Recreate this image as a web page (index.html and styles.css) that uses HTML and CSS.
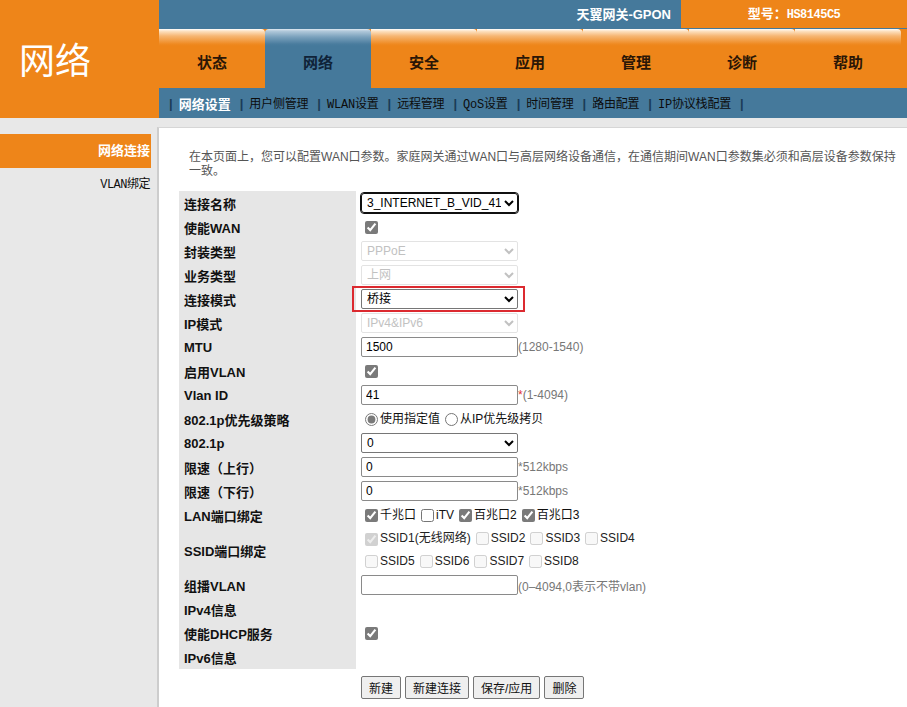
FILE: index.html
```html
<!DOCTYPE html>
<html lang="zh-CN">
<head>
<meta charset="utf-8">
<title>网络 - 网络连接</title>
<link rel="stylesheet" href="styles.css">
</head>
<body>
<header class="header">
  <div class="logo">网络</div>
  <div class="head-right">
    <div class="topbar">
      <div class="brand">天翼网关-GPON</div>
      <div class="model">型号：<span class="mono">HS8145C5</span></div>
    </div>
    <nav class="tabs">
      <a class="tab">状态</a>
      <a class="tab active">网络</a>
      <a class="tab">安全</a>
      <a class="tab">应用</a>
      <a class="tab">管理</a>
      <a class="tab">诊断</a>
      <a class="tab">帮助</a>
    </nav>
    <nav class="subnav">
      <span class="sep">|</span><a class="sub active">网络设置</a>
      <span class="sep">|</span><a class="sub">用户侧管理</a>
      <span class="sep">|</span><a class="sub">WLAN设置</a>
      <span class="sep">|</span><a class="sub">远程管理</a>
      <span class="sep">|</span><a class="sub">QoS设置</a>
      <span class="sep">|</span><a class="sub">时间管理</a>
      <span class="sep">|</span><a class="sub">路由配置</a>
      <span class="sep">|</span><a class="sub">IP协议栈配置</a>
      <span class="sep">|</span>
    </nav>
  </div>
</header>
<div class="main">
  <aside class="sidebar">
    <div class="side-item active">网络连接</div>
    <div class="side-item">VLAN绑定</div>
  </aside>
  <section class="panel">
    <p class="desc">在本页面上，您可以配置WAN口参数。家庭网关通过WAN口与高层网络设备通信，在通信期间WAN口参数集必须和高层设备参数保持一致。</p>
    <table class="form">
      <tr><th>连接名称</th><td><select class="sel focus"><option>3_INTERNET_B_VID_41</option></select></td></tr>
      <tr><th>使能WAN</th><td><input type="checkbox" checked></td></tr>
      <tr><th>封装类型</th><td><select class="sel" disabled><option>PPPoE</option></select></td></tr>
      <tr><th>业务类型</th><td><select class="sel" disabled><option>上网</option></select></td></tr>
      <tr><th>连接模式</th><td><span class="mark"><select class="sel"><option>桥接</option></select></span></td></tr>
      <tr><th>IP模式</th><td><select class="sel" disabled><option>IPv4&amp;IPv6</option></select></td></tr>
      <tr><th>MTU</th><td><input class="txt" type="text" value="1500"><span class="hint">(1280-1540)</span></td></tr>
      <tr><th>启用VLAN</th><td><input type="checkbox" checked></td></tr>
      <tr><th>Vlan ID</th><td><input class="txt" type="text" value="41"><span class="hint"><span class="req">*</span>(1-4094)</span></td></tr>
      <tr><th>802.1p优先级策略</th><td><label class="opt"><input type="radio" name="pri" checked>使用指定值</label><label class="opt"><input type="radio" name="pri">从IP优先级拷贝</label></td></tr>
      <tr><th>802.1p</th><td><select class="sel"><option>0</option></select></td></tr>
      <tr><th>限速（上行）</th><td><input class="txt" type="text" value="0"><span class="hint">*512kbps</span></td></tr>
      <tr><th>限速（下行）</th><td><input class="txt" type="text" value="0"><span class="hint">*512kbps</span></td></tr>
      <tr><th>LAN端口绑定</th><td><label class="opt"><input type="checkbox" checked>千兆口</label><label class="opt"><input type="checkbox">iTV</label><label class="opt"><input type="checkbox" checked>百兆口2</label><label class="opt"><input type="checkbox" checked>百兆口3</label></td></tr>
      <tr class="tall"><th>SSID端口绑定</th><td>
        <div class="line"><label class="opt dim"><input type="checkbox" checked disabled>SSID1(无线网络)</label><label class="opt dim"><input type="checkbox" disabled>SSID2</label><label class="opt dim"><input type="checkbox" disabled>SSID3</label><label class="opt dim"><input type="checkbox" disabled>SSID4</label></div>
        <div class="line"><label class="opt dim"><input type="checkbox" disabled>SSID5</label><label class="opt dim"><input type="checkbox" disabled>SSID6</label><label class="opt dim"><input type="checkbox" disabled>SSID7</label><label class="opt dim"><input type="checkbox" disabled>SSID8</label></div>
      </td></tr>
      <tr><th>组播VLAN</th><td><input class="txt" type="text" value=""><span class="hint">(0–4094,0表示不带vlan)</span></td></tr>
      <tr><th>IPv4信息</th><td></td></tr>
      <tr><th>使能DHCP服务</th><td><input type="checkbox" checked></td></tr>
      <tr><th>IPv6信息</th><td></td></tr>
    </table>
    <div class="actions">
      <button class="btn">新建</button>
      <button class="btn">新建连接</button>
      <button class="btn">保存/应用</button>
      <button class="btn">删除</button>
    </div>
  </section>
</div>
</body>
</html>
```
FILE: styles.css
```css
* { box-sizing: border-box; }
html, body { margin: 0; padding: 0; }
body {
  font-family: "Liberation Sans", "Noto Sans CJK SC", sans-serif;
  font-size: 13px;
  color: #000;
  background: #e8e8e8;
  overflow: hidden;
}

/* header */
.header {
  display: grid;
  grid-template-columns: 159px 1fr;
  height: 118px;
}
.logo {
  background: #ee8519;
  color: #fff;
  font-family: "Noto Sans CJK SC", sans-serif;
  font-size: 36px;
  display: flex;
  align-items: center;
  padding-left: 19px;
  padding-bottom: 2px;
}
.head-right { display: flex; flex-direction: column; }
.topbar {
  height: 29px;
  display: flex;
  background: #45799b;
}
.brand {
  flex: 1;
  text-align: right;
  padding-right: 10px;
  color: #fff;
  font-weight: bold;
  line-height: 29px;
}
.model {
  width: 226px;
  height: 28px;
  background: #ee8519;
  color: #fff;
  font-weight: bold;
  text-align: center;
  line-height: 28px;
}
.mono {
  font-family: "Liberation Mono", monospace;
  font-size: 12px;
  letter-spacing: -0.5px;
}
.tabs {
  height: 59px;
  display: flex;
  background: #ee8519;
}
.tab {
  width: 106px;
  display: flex;
  align-items: center;
  justify-content: center;
  padding-top: 6px;
  font-size: 15px;
  font-weight: bold;
  color: #2b1606;
  background: linear-gradient(#ffffff 0, #fde3c4 2px, #f6b673 7px, #ef8a22 15px, #ee8519 17px);
  border-radius: 0 4px 0 0;
}
.tab.active {
  color: #0f2238;
  background: linear-gradient(#dfe9f0 0, #b3cadb 2px, #7aa1bc 8px, #4a7c9e 15px, #45799b 17px);
  border-radius: 4px 4px 0 0;
}
.subnav {
  height: 30px;
  background: #45799b;
  display: flex;
  align-items: center;
  padding-left: 10px;
  font-family: "Liberation Mono", "Noto Sans CJK SC", monospace;
  font-size: 12px;
  color: #0c0c0c;
}
.sep {
  color: #1a3b57;
  font-family: "Liberation Sans", sans-serif;
  font-weight: bold;
  font-size: 13px;
  margin-right: 6px;
}
.sub { margin-right: 9px; letter-spacing: -0.2px; }
.sub.active {
  color: #fff;
  font-family: "Liberation Sans", "Noto Sans CJK SC", sans-serif;
  font-weight: bold;
  font-size: 13px;
  letter-spacing: 0;
}

/* main */
.main {
  display: flex;
  height: 589px;
}
.sidebar {
  width: 157px;
  padding-top: 16px;
}
.side-item {
  width: 151px;
  height: 34px;
  line-height: 34px;
  text-align: right;
  padding-right: 1px;
  font-family: "Liberation Mono", "Noto Sans CJK SC", monospace;
  font-size: 12px;
  letter-spacing: -0.5px;
  color: #111;
}
.side-item.active {
  background: #ee8519;
  color: #fff;
  font-family: "Liberation Sans", "Noto Sans CJK SC", sans-serif;
  font-weight: bold;
  font-size: 13px;
  letter-spacing: 0;
}
.panel {
  flex: 1;
  margin-top: 9px;
  background: #fff;
  border-left: 2px solid #cdcdcd;
  border-top: 1px solid #d6d6d6;
}
.desc {
  margin: 22px 0 0;
  padding: 0 4px 0 30px;
  font-size: 12px;
  line-height: 14px;
  color: #555;
}
.form {
  margin: 13px 0 0 20px;
  border-collapse: collapse;
}
.form th {
  width: 177px;
  height: 24px;
  padding: 0 0 0 5px;
  text-align: left;
  vertical-align: middle;
  background: #e6e6e6;
  font-size: 13px;
  font-weight: bold;
  color: #111;
}
.form td {
  height: 24px;
  padding: 0 0 0 5px;
  vertical-align: middle;
  white-space: nowrap;
  font-size: 12px;
}
.form tr.tall th, .form tr.tall td { height: 46px; }
.line { height: 23px; display: flex; align-items: center; }

.sel {
  width: 157px;
  height: 20px;
  font-family: "Liberation Sans", "Noto Sans CJK SC", sans-serif;
  font-size: 12px;
  border: 1px solid #767676;
  border-radius: 2px;
  background: #fff;
  color: #000;
  padding: 0 0 0 1px;
  vertical-align: middle;
}
.sel:disabled {
  border-color: #d8d8d8;
  color: #a8a8a8;
}
.sel.focus {
  border: 1px solid #101010;
  outline: 1px solid #101010;
  border-radius: 3px;
}
.mark { position: relative; display: inline-block; vertical-align: middle; }
.mark::after {
  content: "";
  position: absolute;
  top: -3px;
  bottom: -3px;
  left: -9px;
  right: -7px;
  border: 2px solid #dc2a30;
  pointer-events: none;
}
.txt {
  width: 157px;
  height: 20px;
  font-family: "Liberation Sans", sans-serif;
  font-size: 12px;
  border: 1px solid #8a8a8a;
  border-radius: 2px;
  padding: 0 4px;
  vertical-align: middle;
}
.hint {
  color: #777;
  font-size: 12px;
  vertical-align: middle;
}
.req { color: #e03030; }
input[type="checkbox"], input[type="radio"] {
  accent-color: #7a7a7a;
  vertical-align: middle;
}
input[type="checkbox"] { margin: 3px 2px 3px 4px; }
input[type="radio"] { margin: 3px 2px 3px 4px; }
.opt {
  font-size: 12px;
  color: #111;
  margin-right: 1px;
}
.opt.dim { color: #222; margin-right: 1px; }
.actions {
  margin: 7px 0 0 202px;
  display: flex;
  gap: 4px;
}
.btn {
  height: 23px;
  padding: 0 7px;
  font-family: "Liberation Sans", "Noto Sans CJK SC", sans-serif;
  font-size: 12px;
  color: #111;
  background: #efefef;
  border: 1px solid #767676;
  border-radius: 2px;
}
```
